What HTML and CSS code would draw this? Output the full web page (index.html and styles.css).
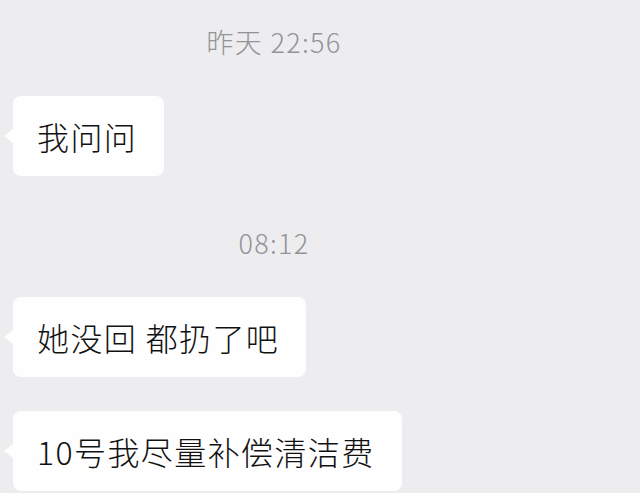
FILE: index.html
```html
<!DOCTYPE html>
<html lang="zh-CN">
<head>
    <meta charset="UTF-8">
    <meta name="viewport" content="width=device-width, initial-scale=1.0">
    <title>聊天记录</title>
    <link rel="stylesheet" href="styles.css">
</head>
<body>

<div class="chat">
    <div class="time">昨天 22:56</div>
    <div class="msg">
        <div class="bubble">我问问</div>
    </div>

    <div class="time">08:12</div>
    <div class="msg">
        <div class="bubble">她没回 都扔了吧</div>
    </div>
    <div class="msg">
        <div class="bubble">10号我尽量补偿清洁费</div>
    </div>
</div>

</body>
</html>
```

FILE: styles.css
```css
body {
    margin: 0;
    background-color: #ededf0;
    font-family: "Noto Sans CJK SC", "Noto Sans", sans-serif;
    height: 493px;
    overflow: hidden;
}
.chat {
    padding: 22px 0 0 13px;
    display: flex;
    flex-direction: column;
    align-items: flex-start;
}
.time {
    width: 522px;
    text-align: center;
    font-size: 27px;
    font-weight: 300;
    letter-spacing: 1.3px;
    line-height: 40px;
    color: #939396;
    margin-bottom: 34px;
}
.msg + .time {
    margin-top: 47px;
}
.msg + .msg {
    margin-top: 34px;
}
.bubble {
    position: relative;
    background-color: #fefefe;
    border-radius: 8px;
    padding: 18px 27px 18px 24px;
    font-size: 32px;
    font-weight: 300;
    letter-spacing: 1.4px;
    line-height: 44px;
    color: #111;
}
.bubble::before {
    content: "";
    position: absolute;
    left: -9px;
    top: 50%;
    margin-top: -7px;
    border-style: solid;
    border-width: 7px 9px 7px 0;
    border-color: transparent #fefefe transparent transparent;
}
```
